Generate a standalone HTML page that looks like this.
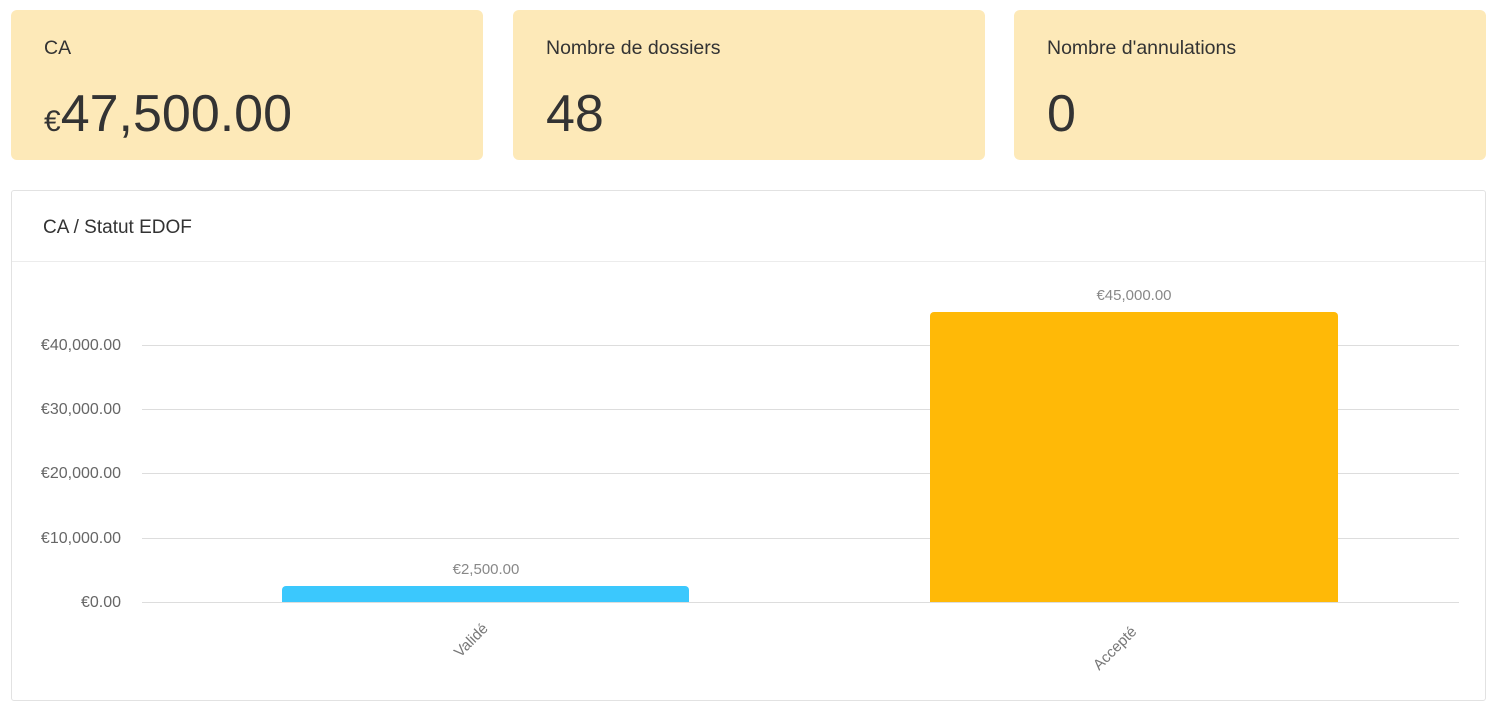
<!DOCTYPE html>
<html><head><meta charset="utf-8"><style>
body{margin:0;width:1500px;height:709px;background:#fff;font-family:"Liberation Sans",Helvetica,Arial,sans-serif;color:#333;position:relative;overflow:hidden}
.card{position:absolute;top:10px;width:472px;height:150px;background:#fde9b8;border-radius:6px}
.card .t{position:absolute;left:33px;top:27px;font-size:19.5px;color:#333}
.card .v{position:absolute;left:33px;top:74px;font-size:52px;line-height:60px;color:#333}
.card .v small{font-size:30px}
.panel{position:absolute;left:11px;top:190px;width:1473px;height:509px;border:1px solid #e2e2e2;border-radius:3px}
.panel .h{height:70px;border-bottom:1px solid #ececec;font-size:19px;line-height:74px;padding-left:31px}
.g{position:absolute;left:142px;width:1317px;height:1px;background:#ddd}
.yl{position:absolute;right:1379px;font-size:16px;color:#666;line-height:16px}
.bar{position:absolute;border-radius:4px 4px 0 0}
.vl{position:absolute;font-size:15px;color:#888;text-align:center;width:200px}
.xl{position:absolute;font-size:15px;color:#777;transform:rotate(-45deg);transform-origin:center}
</style></head><body>
<div class="card" style="left:11px"><div class="t">CA</div><div class="v"><small>€</small>47,500.00</div></div>
<div class="card" style="left:513px"><div class="t">Nombre de dossiers</div><div class="v">48</div></div>
<div class="card" style="left:1014px"><div class="t">Nombre d'annulations</div><div class="v">0</div></div>
<div class="panel"><div class="h">CA / Statut EDOF</div></div>
<div class="g" style="top:345px"></div>
<div class="g" style="top:409px"></div>
<div class="g" style="top:473px"></div>
<div class="g" style="top:538px"></div>
<div class="yl" style="top:338px">€40,000.00</div>
<div class="yl" style="top:402px">€30,000.00</div>
<div class="yl" style="top:466px">€20,000.00</div>
<div class="yl" style="top:531px">€10,000.00</div>
<div class="yl" style="top:595px">€0.00</div>
<div class="bar" style="left:282px;width:407px;top:586px;height:16px;background:#3bc8fd"></div>
<div class="bar" style="left:930px;width:408px;top:312px;height:290px;background:#ffb907"></div>
<div class="g" style="top:602px"></div>
<div class="vl" style="left:386px;top:561px">€2,500.00</div>
<div class="vl" style="left:1034px;top:287px">€45,000.00</div>
<div class="xl" style="left:451px;top:632px">Validé</div>
<div class="xl" style="left:1088px;top:640px">Accepté</div>
</body></html>
